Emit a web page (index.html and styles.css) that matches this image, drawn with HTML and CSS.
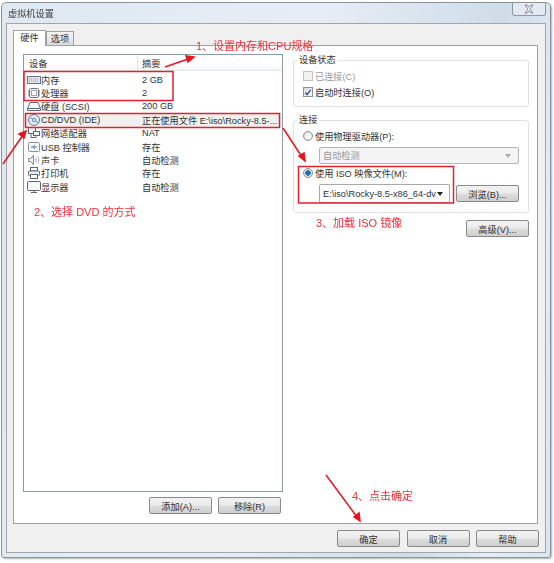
FILE: index.html
```html
<!DOCTYPE html>
<html lang="zh-CN">
<head>
    <meta charset="UTF-8">
    <meta name="viewport" content="width=device-width, initial-scale=1.0">
    <title>虚拟机设置</title>
    <link rel="stylesheet" href="styles.css">
</head>
<body>
    <div class="window">
        <!-- 标题栏 -->
        <div class="titlebar">
            <span class="title">虚拟机设置</span>
            <span class="close">
                <svg width="12" height="10" viewBox="0 0 12 10"><path d="M2 1h2l2 2.2L8 1h2L7 5l3 4H8L6 6.8 4 9H2l3-4z" fill="#f4f6f8" stroke="#6d7480" stroke-width="0.8"/></svg>
            </span>
        </div>

        <div class="client">
            <div class="tabs">
                <span class="tab active">硬件</span>
                <span class="tab">选项</span>
            </div>

            <div class="panel">
                <!-- 设备列表 -->
                <div class="left">
                    <div class="list">
                        <div class="list-head">
                            <span class="col-device">设备</span>
                            <span class="col-summary">摘要</span>
                        </div>
                        <div class="rows">
                            <div class="row">
                                <svg class="icon" width="14" height="12" viewBox="0 0 14 12"><rect x="0.5" y="2.5" width="13" height="7" fill="#dfe6ee" stroke="#6b7680"/><path d="M2 5h10M2 7h10" stroke="#8a97a5" stroke-dasharray="1 1"/></svg>
                                <span class="name">内存</span><span class="value">2 GB</span>
                            </div>
                            <div class="row">
                                <svg class="icon" width="14" height="12" viewBox="0 0 14 12"><rect x="2.5" y="1.5" width="9" height="9" rx="1" fill="#eef1f4" stroke="#6b7680"/><rect x="4.5" y="3.5" width="5" height="5" fill="#fff" stroke="#9aa5b0"/><path d="M1 4h1M1 6h1M1 8h1M12 4h1M12 6h1M12 8h1" stroke="#6b7680"/></svg>
                                <span class="name">处理器</span><span class="value">2</span>
                            </div>
                            <div class="row">
                                <svg class="icon" width="14" height="12" viewBox="0 0 14 12"><path d="M3 2.5h8l2.5 6v2h-13v-2z" fill="#f6f7f8" stroke="#5f6872"/><path d="M1 8.5h12" stroke="#5f6872"/></svg>
                                <span class="name">硬盘 (SCSI)</span><span class="value">200 GB</span>
                            </div>
                            <div class="row selected">
                                <svg class="icon" width="14" height="12" viewBox="0 0 14 12"><circle cx="7" cy="6" r="5.5" fill="#dcebf5" stroke="#5e7f99"/><circle cx="7" cy="6" r="1.6" fill="#fff" stroke="#5e7f99"/><path d="M3.5 3.5l2 1.6M8.8 7l2 1.6" stroke="#5e7f99"/></svg>
                                <span class="name">CD/DVD (IDE)</span><span class="value">正在使用文件 E:\iso\Rocky-8.5-...</span>
                            </div>
                            <div class="row">
                                <svg class="icon" width="14" height="12" viewBox="0 0 14 12"><rect x="1.5" y="0.5" width="7" height="6" fill="#f2f4f6" stroke="#5f6872"/><rect x="6.5" y="4.5" width="6" height="4" fill="#f2f4f6" stroke="#5f6872"/><path d="M4 6.5v4h5v-2" fill="none" stroke="#5f6872"/></svg>
                                <span class="name">网络适配器</span><span class="value">NAT</span>
                            </div>
                            <div class="row">
                                <svg class="icon" width="14" height="12" viewBox="0 0 14 12"><rect x="1.5" y="1.5" width="11" height="9" rx="1" fill="#f4f6f8" stroke="#87929d"/><path d="M4 6h6M6 6l2-2M6 6l2 2" fill="none" stroke="#5f7f99"/></svg>
                                <span class="name">USB 控制器</span><span class="value">存在</span>
                            </div>
                            <div class="row">
                                <svg class="icon" width="14" height="12" viewBox="0 0 14 12"><path d="M1.5 4.5h2l3-3v9l-3-3h-2z" fill="#eceff2" stroke="#7d8791"/><path d="M8.5 4a3 3 0 0 1 0 4M10.500 2.500a5 5 0 0 1 0 7" fill="none" stroke="#9aa5b0"/></svg>
                                <span class="name">声卡</span><span class="value">自动检测</span>
                            </div>
                            <div class="row">
                                <svg class="icon" width="14" height="12" viewBox="0 0 14 12"><rect x="3.500" y="0.500" width="7" height="3.500" fill="#fff" stroke="#5f6872"/><rect x="1.500" y="4" width="11" height="4.500" rx="1" fill="#eef1f4" stroke="#5f6872"/><rect x="3.500" y="7.500" width="7" height="4" fill="#fff" stroke="#5f6872"/></svg>
                                <span class="name">打印机</span><span class="value">存在</span>
                            </div>
                            <div class="row">
                                <svg class="icon" width="14" height="12" viewBox="0 0 14 12"><rect x="0.500" y="0.500" width="13" height="9" rx="1" fill="#f4f6f8" stroke="#5a6570"/><path d="M4 11.500h6" stroke="#5a6570"/><path d="M7 9.500v2" stroke="#5a6570"/></svg>
                                <span class="name">显示器</span><span class="value">自动检测</span>
                            </div>
                        </div>
                    </div>
                    <div class="list-buttons">
                        <button class="btn">添加(A)...</button>
                        <button class="btn">移除(R)</button>
                    </div>
                </div>

                <!-- 右侧设置 -->
                <div class="right">
                    <fieldset class="group group-status">
                        <legend>设备状态</legend>
                        <div class="option disabled"><span class="check"></span>已连接(C)</div>
                        <div class="option">
                            <span class="check">
                                <svg width="9" height="9" viewBox="0 0 9 9"><path d="M1.500 4.500l2 2.500L7.500 1.500" fill="none" stroke="#2f4f9a" stroke-width="1.500"/></svg>
                            </span>启动时连接(O)
                        </div>
                    </fieldset>

                    <fieldset class="group group-connect">
                        <legend>连接</legend>
                        <div class="option"><span class="radio"></span>使用物理驱动器(P):</div>
                        <div class="select disabled">自动检测<span class="caret"></span></div>
                        <div class="option iso-option"><span class="radio on"></span>使用 ISO 映像文件(M):</div>
                        <div class="iso-row">
                            <div class="select iso-select"><span class="iso-path">E:\iso\Rocky-8.5-x86_64-dv</span><span class="caret"></span></div>
                            <button class="btn">浏览(B)...</button>
                        </div>
                    </fieldset>

                    <div class="advanced">
                        <button class="btn">高级(V)...</button>
                    </div>
                </div>
            </div>

            <div class="footer">
                <button class="btn">确定</button>
                <button class="btn">取消</button>
                <button class="btn">帮助</button>
            </div>
        </div>
    </div>

    <!-- 红色标注 -->
    <svg class="marks" width="554" height="563" viewBox="0 0 554 563">
        <g fill="none" stroke="#e3202c" stroke-width="1.500">
            <rect x="24" y="71.500" width="149" height="29"/>
            <rect x="25.500" y="113.500" width="254" height="14"/>
            <rect x="298.500" y="166.500" width="155" height="36.500"/>
        </g>
        <g stroke="#e8141e" stroke-width="1.500" fill="#e8141e">
            <path d="M165 67L188 59"/>
            <path d="M194 57l-8-1 2 6z"/>
            <path d="M3 164L23 135"/>
            <path d="M26 131l-7 3 5 4z"/>
            <path d="M283 128L302 157"/>
            <path d="M305 161l-1-8-5 3z"/>
            <path d="M326 475L357 517"/>
            <path d="M360 521l-1-8-5 4z"/>
        </g>
    </svg>
    <span class="note note-1">1、设置内存和CPU规格</span>
    <span class="note note-2">2、选择 DVD 的方式</span>
    <span class="note note-3">3、加载 ISO 镜像</span>
    <span class="note note-4">4、点击确定</span>
</body>
</html>
```

FILE: styles.css
```css
* {
    box-sizing: border-box;
}
body {
    margin: 0;
    width: 554px;
    height: 563px;
    overflow: hidden;
    position: relative;
    background: #fff;
    font-family: "Liberation Sans", "Noto Sans CJK SC", sans-serif;
    font-size: 9.200px;
    color: #333;
}
.window {
    margin: 2px 3px 0 1px;
    height: 556px;
    display: flex;
    flex-direction: column;
    border: 1px solid #8b9299;
    border-radius: 5px 5px 3px 3px;
    background: linear-gradient(100deg, #dde8f1 0%, #e6eef5 50%, #cfdce8 78%, #e3ecf4 90%, #dbe6ef 100%);
    box-shadow: 1px 1px 2px #b0b4b8;
    filter: blur(0.4px);
}
.titlebar {
    height: 20px;
    flex: none;
    display: flex;
    justify-content: space-between;
    align-items: flex-start;
    padding-left: 6px;
}
.title {
    line-height: 23px;
    color: #444;
}
.close {
    width: 34px;
    height: 13px;
    margin-right: 4px;
    display: flex;
    align-items: center;
    justify-content: center;
    border: 1px solid #8d99a6;
    border-top: none;
    border-radius: 0 0 3px 3px;
    background: #e3eaf1;
}
.client {
    flex: 1;
    margin: 0 4px 4px 4px;
    padding: 6px 7px 5px 6px;
    display: flex;
    flex-direction: column;
    background: #f0f0f0;
    border: 1px solid #a0a6ac;
}
.tabs {
    display: flex;
    height: 15px;
    align-items: flex-end;
    flex: none;
}
.tab {
    width: 28px;
    height: 14px;
    text-align: center;
    line-height: 14px;
    background: linear-gradient(#f4f4f4, #dcdcdc);
    border: 1px solid #a0a0a0;
    border-bottom: none;
}
.tab.active {
    width: 33px;
    height: 16px;
    margin-bottom: -1px;
    background: #fff;
    position: relative;
    z-index: 1;
    line-height: 15px;
}
.panel {
    height: 479px;
    flex: none;
    display: flex;
    gap: 10px;
    padding: 8px 8px 9px 9px;
    background: #fff;
    border: 1px solid #a0a0a0;
}
.left {
    width: 260px;
    display: flex;
    flex-direction: column;
    gap: 5px;
}
.list {
    flex: 1;
    border: 1px solid #8e9aa5;
}
.list-head {
    display: flex;
    height: 16px;
    line-height: 18px;
    background: linear-gradient(#fff, #fff 60%, #f2f4f6);
    border-bottom: 1px solid #e3e6ea;
}
.col-device {
    width: 114px;
    padding-left: 5px;
    border-right: 1px solid #e0e2e5;
}
.col-summary {
    padding-left: 4px;
}
.rows {
    padding-top: 2px;
}
.row {
    height: 13.400px;
    display: flex;
    align-items: center;
    white-space: nowrap;
    padding-left: 3px;
}
.row.selected {
    background: #f0f0f0;
}
.icon {
    flex: none;
}
.name {
    width: 101px;
    flex: none;
}
.btn {
    width: 63px;
    height: 17px;
    padding: 0;
    font: inherit;
    color: #333;
    background: linear-gradient(#f2f2f2, #ebebeb 48%, #dddddd 52%, #cfcfcf);
    border: 1px solid #8a8a8a;
    border-radius: 2px;
}
.list-buttons {
    display: flex;
    justify-content: flex-end;
    gap: 6px;
    padding-right: 2px;
}
.right {
    width: 236px;
    display: flex;
    flex-direction: column;
    gap: 7px;
}
.group {
    margin: 0;
    padding: 0 0 0 9px;
    border: 1px solid #dde1e5;
    border-radius: 3px;
    min-width: 0;
}
.group legend {
    padding: 0 2px;
    margin-left: -6px;
    line-height: 13px;
}
.group-status {
    height: 53px;
}
.group-connect {
    height: 99px;
}
.option {
    height: 16px;
    display: flex;
    align-items: center;
    gap: 2px;
    white-space: nowrap;
}
.option.disabled {
    color: #9a9a9a;
}
.group .option:first-of-type {
    margin-top: 1px;
}
.check {
    width: 10px;
    height: 10px;
    display: flex;
    align-items: center;
    justify-content: center;
    border: 1px solid #8e8f8f;
    background: linear-gradient(135deg, #d8d8d8, #fbfbfb);
}
.disabled .check {
    border-color: #c4c4c4;
    background: #f2f2f2;
}
.radio {
    width: 10px;
    height: 10px;
    border-radius: 50%;
    border: 1px solid #8e8f8f;
    background: radial-gradient(circle at 60% 60%, #fff, #d6d6d6);
}
.radio.on {
    background: radial-gradient(circle, #1f6fb5 0 2.500px, #e6e6e6 3px);
}
.select {
    position: relative;
    height: 17px;
    width: 200px;
    margin: 3px 0 1px 16px;
    padding-left: 3px;
    line-height: 16px;
    background: #f4f4f4;
    border: 1px solid #b5b5b5;
    border-radius: 2px;
    color: #999;
}
.caret {
    position: absolute;
    right: 7px;
    top: 6px;
    border-left: 3px solid transparent;
    border-right: 3px solid transparent;
    border-top: 4px solid #aaa;
}
.iso-row {
    display: flex;
    align-items: center;
    gap: 6px;
    margin: 3px 0 0 16px;
}
.iso-select {
    width: 131px;
    height: 19px;
    margin: 0;
    line-height: 18px;
    background: #fff;
    color: #333;
    border-color: #a8a8a8;
}
.iso-path {
    display: block;
    width: 116px;
    overflow: hidden;
    white-space: nowrap;
}
.iso-select .caret {
    border-top-color: #222;
    top: 7px;
    right: 6px;
}
.advanced {
    display: flex;
    justify-content: flex-end;
}
.footer {
    display: flex;
    justify-content: flex-end;
    gap: 6.500px;
    margin: 6px -1px 0 0;
}
.marks {
    position: absolute;
    left: 0;
    top: 0;
}
.note {
    position: absolute;
    font-size: 11px;
    line-height: 14px;
    color: #f0303c;
    white-space: nowrap;
}
.note-1 {
    left: 196px;
    top: 39px;
}
.note-2 {
    left: 34px;
    top: 205px;
}
.note-3 {
    left: 316px;
    top: 216px;
}
.note-4 {
    left: 352px;
    top: 489px;
}
```
